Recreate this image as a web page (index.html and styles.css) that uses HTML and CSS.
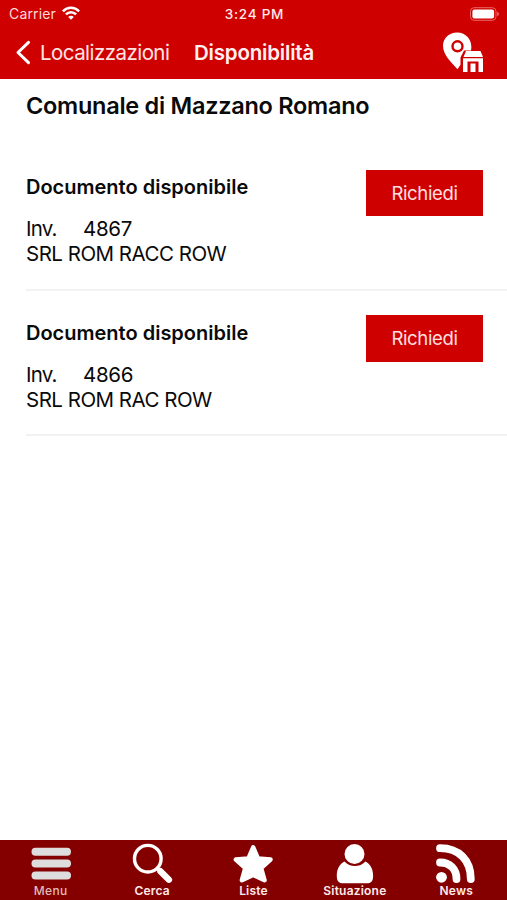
FILE: index.html
```html
<!DOCTYPE html>
<html lang="it">
<head>
<meta charset="utf-8">
<title>Disponibilità</title>
<link rel="stylesheet" href="styles.css">
</head>
<body>
<div class="app">
  <header class="header">
    <div class="status">
      <div class="status-left">
        <span class="carrier">Carrier</span>
        <svg class="wifi" width="18" height="14" viewBox="0 0 18 14" fill="none" stroke="#fff" stroke-width="2.5">
          <path d="M.9 5.3C5.4.7 12.6.7 17.1 5.3M3.9 8.4c2.9-2.900 7.300-2.900 10.200 0"/>
          <path d="M9 13.700 6.200 10.900c1.600-1.500 4-1.500 5.600 0z" fill="#fff" stroke="none"/>
        </svg>
      </div>
      <span class="time">3:24 PM</span>
      <div class="status-right">
        <svg width="31" height="14" viewBox="0 0 31 14">
          <rect x="1.500" y=".7" width="25.500" height="12.600" rx="3.600" fill="none" stroke="#e66" stroke-width="1"/>
          <rect x="3.400" y="2.600" width="21.700" height="8.800" rx="2" fill="#fff"/>
          <path d="M28.200 4.800c2.400.7 2.400 3.700 0 4.400z" fill="#e66"/>
        </svg>
      </div>
    </div>
    <nav class="navbar">
      <svg class="chevron" width="16" height="26" viewBox="0 0 16 26" fill="none" stroke="#fff" stroke-width="3" stroke-linecap="round" stroke-linejoin="round"><path d="M13.500 2.300 3 12.500 13.500 22.700"/></svg>
      <span class="back">Localizzazioni</span>
      <h1 class="nav-title">Disponibilità</h1>
      <svg class="place" width="42" height="42" viewBox="0 0 42 42">
        <path fill="#fff" d="M16 .5C8.200.5 2 6.300 2 13.800c0 9.200 8 16.200 14.500 23.400l3-4.400v-7.300l3.500-7h7.100C32 8 25 .5 16 .5z"/>
        <circle cx="16.500" cy="14.300" r="5" fill="#fff" stroke="#cf0000" stroke-width="2.400"/>
        <path fill="#fff" d="M25 19h14.500l2.500 6H22.500zM22 26.200h20V40h-4.500V29.500h-11V40H22zM29.500 31.500h5V40h-5z"/>
      </svg>
    </nav>
  </header>

  <main class="content">
    <h2 class="library">Comunale di Mazzano Romano</h2>
    <section class="item">
      <div class="details">
        <h3 class="availability">Documento disponibile</h3>
        <p class="inventory"><span class="label">Inv.</span><span class="number">4867</span></p>
        <p class="shelf">SRL ROM RACC ROW</p>
      </div>
      <button class="request">Richiedi</button>
    </section>
    <section class="item">
      <div class="details">
        <h3 class="availability">Documento disponibile</h3>
        <p class="inventory"><span class="label">Inv.</span><span class="number">4866</span></p>
        <p class="shelf">SRL ROM RAC ROW</p>
      </div>
      <button class="request">Richiedi</button>
    </section>
  </main>

  <footer class="tabs">
    <a class="tab tab-menu">
      <svg width="42" height="42" viewBox="0 0 42 42" fill="#ddd"><rect x="1.500" y="4.800" width="39.500" height="8" rx="4"/><rect x="1.500" y="16.500" width="39.500" height="8" rx="4"/><rect x="1.500" y="28.400" width="39.500" height="8" rx="4"/></svg>
      <span>Menu</span>
    </a>
    <a class="tab">
      <svg width="42" height="42" viewBox="0 0 42 42" fill="none" stroke="#fff"><circle cx="16.800" cy="15.700" r="13.300" stroke-width="3.400"/><path d="m29.400 28.200 8.500 8.500" stroke-width="6.400" stroke-linecap="round"/><path d="m25.800 25 5 5" stroke-width="3"/></svg>
      <span>Cerca</span>
    </a>
    <a class="tab tab-liste">
      <svg width="42" height="42" viewBox="0 0 42 42" fill="#fff" stroke="#fff" stroke-width="4.500" stroke-linejoin="round"><path d="m21.200 4.300 4.700 11.100 12.600 1.200-9.400 8.400 3.400 12.200L21.200 32 9.900 37.200 13.300 25l-9.400-8.400 12.600-1.200z"/></svg>
      <span>Liste</span>
    </a>
    <a class="tab">
      <svg width="42" height="42" viewBox="0 0 42 42" fill="#fff"><circle cx="20.500" cy="11" r="10"/><path d="M10.500 18.500c-4.800 2.300-7.700 7.500-7.700 14.200C2.800 38 4.500 40.300 9.500 40.300h23c5 0 6.600-2.300 6.600-7.600 0-6.700-2.900-11.900-7.700-14.200-5.500 6-15.400 6-20.900 0z"/></svg>
      <span>Situazione</span>
    </a>
    <a class="tab">
      <svg width="42" height="42" viewBox="0 0 42 42" fill="none" stroke="#fff" stroke-width="7.800" stroke-linecap="round"><circle cx="6.500" cy="34.300" r="5.400" fill="#fff" stroke="none"/><path d="M5 19.500c10 0 16.500 6.500 16.500 16.500M5 5.200c19 0 30.800 12 30.800 30.800"/></svg>
      <span>News</span>
    </a>
  </footer>
</div>
</body>
</html>
```

FILE: styles.css
```css
* { box-sizing: border-box; }
body { margin: 0; background: #fff; font-family: Inter, "Liberation Sans", sans-serif; color: #0a0a0a; }
h1, h2, h3, p { margin: 0; }
svg { display: block; flex: none; }
.app { height: 900px; display: flex; flex-direction: column; overflow: hidden; }

.header { height: 79px; flex: none; background: #cf0000; color: #fff; white-space: nowrap; }
.status { height: 27px; display: grid; grid-template-columns: 1fr auto 1fr; align-items: center; padding: 0 7px 0 9px; }
.status-left { display: flex; align-items: center; gap: 6px; }
.carrier { font-size: 14px; color: #ffdada; letter-spacing: .15px; }
.wifi { margin-top: -1px; }
.time { font-size: 13.5px; font-weight: 550; letter-spacing: .75px; color: #ffeaea; }
.status-right { display: flex; justify-content: flex-end; }
.navbar { height: 52px; display: flex; align-items: center; padding: 0 24px 1px 15px; }
.chevron { margin-right: 9px; }
.back { font-size: 20.5px; letter-spacing: -.55px; color: #ffe4e4; width: 154px; }
.nav-title { font-size: 20.5px; font-weight: 560; letter-spacing: -.2px; color: #fff0f0; }
.place { margin-left: auto; }

.content { flex: 1; padding-left: 26px; }
.library { height: 66px; padding-top: 12px; font-size: 23.5px; line-height: 30px; font-weight: 560; letter-spacing: -.27px; white-space: nowrap; }
.item { height: 145.500px; display: flex; justify-content: space-between; padding: 24.500px 24px 0 0; border-bottom: 2px solid #f2f2f2; }
.availability { margin-top: 4.600px; font-size: 20px; line-height: 26px; font-weight: 580; }
.inventory { margin-top: 16px; display: flex; font-size: 20.5px; line-height: 25px; }
.label { width: 57px; letter-spacing: -.8px; }
.number { letter-spacing: -.3px; }
.shelf { font-size: 20.5px; line-height: 25px; letter-spacing: -.5px; }
.request { width: 117px; height: 46.500px; padding: 0; border: 0; background: #cf0000; color: #ffe0e0; font: 18.5px Inter, "Liberation Sans", sans-serif; letter-spacing: -.35px; }

.tabs { height: 60px; flex: none; display: grid; grid-template-columns: repeat(5, 1fr); background: #840000; }
.tab { display: flex; flex-direction: column; align-items: center; padding-top: 3px; color: #ffeaea; font-size: 12px; line-height: 12px; font-weight: 600; letter-spacing: .2px; }
.tab-menu { color: #dfbcbc; font-weight: 540; letter-spacing: .35px; }
```
